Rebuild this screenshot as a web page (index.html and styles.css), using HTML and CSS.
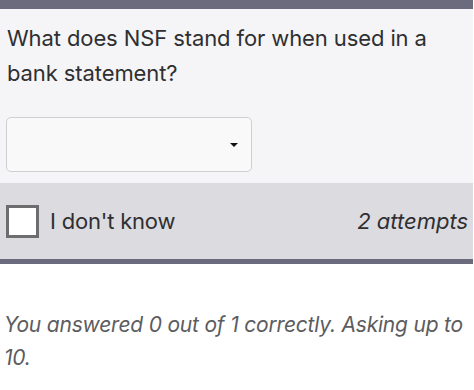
FILE: index.html
```html
<!DOCTYPE html>
<html>
<head>
<meta charset="utf-8">
<link rel="stylesheet" href="styles.css">
</head>
<body>
<div class="card">
  <div class="body">
    <p class="question">What does NSF stand for when used in a bank statement?</p>
    <div class="select"><span class="arrow"></span></div>
  </div>
  <div class="band">
    <span class="box"></span>
    <span class="idk">I don't know</span>
    <span class="attempts">2 attempts</span>
  </div>
</div>
<p class="status">You answered 0 out of 1 correctly. Asking up to 10.</p>
</body>
</html>
```

FILE: styles.css
```css
html, body {
  margin: 0;
  padding: 0;
  background: #ffffff;
  font-family: Inter, "Noto Sans", sans-serif;
}
.card {
  width: 473px;
  border-top: 9px solid #6c6b7e;
  border-bottom: 5px solid #6c6b7e;
  background: #f5f5f7;
}
.body {
  padding: 12px 6px 11px 6px;
}
.question {
  margin: 0 0 26px 1px;
  font-size: 22px;
  line-height: 35px;
  letter-spacing: -0.1px;
  color: #2f2f32;
}
.select {
  width: 231px;
  height: 53px;
  border: 1px solid #cfcfd3;
  border-radius: 5px;
  background: #f9f9fa;
  display: flex;
  align-items: center;
  justify-content: flex-end;
  padding-right: 13px;
}
.arrow {
  width: 0;
  height: 0;
  border-left: 4px solid transparent;
  border-right: 4px solid transparent;
  border-top: 4px solid #111;
  margin-top: 1px;
}
.band {
  height: 76px;
  background: #dcdbe0;
  display: flex;
  align-items: center;
  padding: 0 5px 0 6px;
}
.box {
  width: 27px;
  height: 27px;
  border: 3px solid #6d6d6f;
  background: #ffffff;
  flex: none;
}
.idk {
  margin-left: 11px;
  font-size: 22px;
  letter-spacing: -0.2px;
  color: #2f2f32;
  flex: 1;
}
.attempts {
  font-size: 22px;
  font-style: italic;
  color: #2f2f32;
}
.status {
  margin: 44px 0 0 4px;
  font-size: 21px;
  line-height: 33px;
  letter-spacing: -0.2px;
  font-style: italic;
  color: #5c5c60;
}
```
